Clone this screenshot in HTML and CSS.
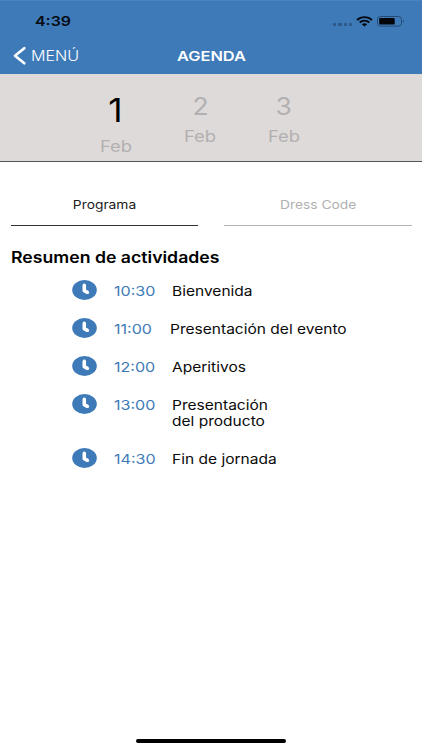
FILE: index.html
```
<!DOCTYPE html>
<html lang="es">
<head>
<meta charset="utf-8">
<title>Agenda</title>
<link rel="stylesheet" href="styles.css">
</head>
<body>
<svg class="defs" aria-hidden="true">
  <symbol id="clock" viewBox="0 0 25 20">
    <ellipse cx="12.5" cy="10" rx="12.3" ry="10" fill="#3e7ab8"/>
    <path d="M12.300 4.800V10.800L15.800 12.600" fill="none" stroke="#fff" stroke-width="3.500" stroke-linejoin="round"/><path d="M12.300 4.800V10.800L15.800 12.600" fill="none" stroke="#fff" stroke-width="2.800" stroke-linejoin="round" stroke-linecap="round"/>
  </symbol>
</svg>
<header>
  <div class="status">
    <span class="t clock">4:39</span>
    <div class="indicators">
      <div class="dots"><i></i><i></i><i></i><i></i></div>
      <svg width="17" height="11" viewBox="0 0 17 11"><g fill="none" stroke="#050a12" stroke-width="1.9"><path d="M1 4.1C5.1.1 11.900.1 16 4.100"/><path d="M3.700 6.500C6.400 4 10.600 4 13.300 6.500"/></g><path d="M5.800 8.300C7.300 6.900 9.700 6.900 11.200 8.300L8.500 10.500Z" fill="#050a12"/></svg>
      <svg width="28" height="11" viewBox="0 0 28 11"><rect x=".5" y=".5" width="24" height="9.600" rx="2.800" fill="none" stroke="#264b72"/><rect x="2.200" y="2" width="15.500" height="6.600" rx="1" fill="#02050a"/><path d="M26 3.600Q27.600 5.300 26 7Z" fill="#1d3d60"/></svg>
    </div>
  </div>
  <nav class="bar">
    <a class="back"><svg width="14" height="20" viewBox="0 0 14 20"><path d="M11.300 2.200L2 9.700L11.300 17.200" fill="none" stroke="#fff" stroke-width="2.700" stroke-linecap="round" stroke-linejoin="round"/></svg><span class="t menu">MENÚ</span></a>
    <h1><span class="t">AGENDA</span></h1>
  </nav>
</header>
<section class="days">
  <div class="day active"><span class="t num">1</span><span class="t month">Feb</span></div>
  <div class="day"><span class="t num">2</span><span class="t month">Feb</span></div>
  <div class="day"><span class="t num">3</span><span class="t month">Feb</span></div>
</section>
<div class="tabs">
  <div class="tab selected"><span class="t">Programa</span></div>
  <div class="tab"><span class="t">Dress Code</span></div>
</div>
<main>
  <h2><span class="t">Resumen de actividades</span></h2>
  <ul>
    <li><svg class="icon"><use href="#clock"/></svg><span class="t time">10:30</span><span class="t label">Bienvenida</span></li>
    <li><svg class="icon"><use href="#clock"/></svg><span class="t time">11:00</span><span class="t label wide">Presentación del evento</span></li>
    <li><svg class="icon"><use href="#clock"/></svg><span class="t time">12:00</span><span class="t label">Aperitivos</span></li>
    <li class="tall"><svg class="icon"><use href="#clock"/></svg><span class="t time">13:00</span><span class="t label">Presentación<br>del producto</span></li>
    <li><svg class="icon"><use href="#clock"/></svg><span class="t time">14:30</span><span class="t label">Fin de jornada</span></li>
  </ul>
</main>
<footer><div class="home"></div></footer>
</body>
</html>
```
FILE: styles.css
```
* { box-sizing: border-box; margin: 0; padding: 0; }
body {
  width: 422px; height: 750px; overflow: hidden;
  display: flex; flex-direction: column;
  background: #fff; color: #0a0a0a;
  font-family: Inter, "Liberation Sans", sans-serif;
}
.defs { display: none; }
/* The typeface is drawn in an expanded width. */
.t { display: block; width: max-content; margin: 0 auto; white-space: nowrap; transform: scaleX(1.15); transform-origin: center; }
header { height: 74px; background: #3e7ab8; color: #fff; border-top: 1px solid #4a84be; }
.status { height: 40px; display: flex; justify-content: space-between; padding: 0 17px 0 35px; }
.clock { margin: 0; font-size: 13.5px; line-height: 40px; font-weight: 600; color: #050a12; transform: scaleX(1.18); transform-origin: left; }
.indicators { display: flex; align-items: center; gap: 4px; }
.indicators svg { display: block; }
.dots { display: flex; gap: 2px; padding-top: 7px; }
.dots i { width: 3.200px; height: 3px; border-radius: 1px; background: #2c5987; }
.bar { height: 30px; display: grid; grid-template-columns: 120px 182px 120px; align-items: center; }
.back { display: flex; align-items: center; padding-left: 12.500px; gap: 4.500px; }
.menu { margin: 0; font-size: 14px; line-height: 30px; font-weight: 300; transform-origin: left; }
h1 { font-size: 13.500px; line-height: 30px; font-weight: 600; text-align: center; }
h1 .t { transform: scaleX(1.215); }
.days {
  height: 88px; background: #dedad9; border-bottom: 1px solid #555;
  display: flex; padding-left: 74px; color: #b2b0b0;
}
.day { width: 84px; padding-top: 17px; text-align: center; }
.num { font-size: 24.500px; line-height: 30px; transform: scaleX(1.08); }
.month { font-size: 16px; line-height: 30px; }
.active { padding-top: 19px; }
.active .num { font-size: 32px; line-height: 36px; color: #000; transform: scaleX(1.1); }
.active .month { line-height: 34px; }
.tabs { display: flex; gap: 26px; padding: 22px 10.500px 0; }
.tab { flex: 1; height: 42px; border-bottom: 1px solid #b4b4b4; color: #b0b0b0; text-align: center; font-size: 12px; line-height: 41px; }
.selected { border-color: #333; color: #1a1a1a; }
main { padding: 21px 0 0 11px; }
h2 { font-size: 15.500px; line-height: 22px; font-weight: 600; color: #000; }
h2 .t { margin: 0; transform: scaleX(1.14); transform-origin: left; }
ul { list-style: none; padding: 11px 0 0 61px; }
li { height: 38px; display: grid; grid-template-columns: 42px 58px max-content; align-items: start; }
.tall { height: 54px; }
.icon { width: 25px; height: 20px; }
.time, .label { margin: 0; font-size: 13.500px; line-height: 16px; padding-top: 3px; transform-origin: left; }
.time { color: #3e7ab8; transform: scaleX(1.19); }
.wide { margin-left: -2.500px; }
footer { margin-top: auto; padding-bottom: 7px; }
.home { width: 150px; height: 4px; margin: 0 auto; border-radius: 2px; background: #000; }
```
